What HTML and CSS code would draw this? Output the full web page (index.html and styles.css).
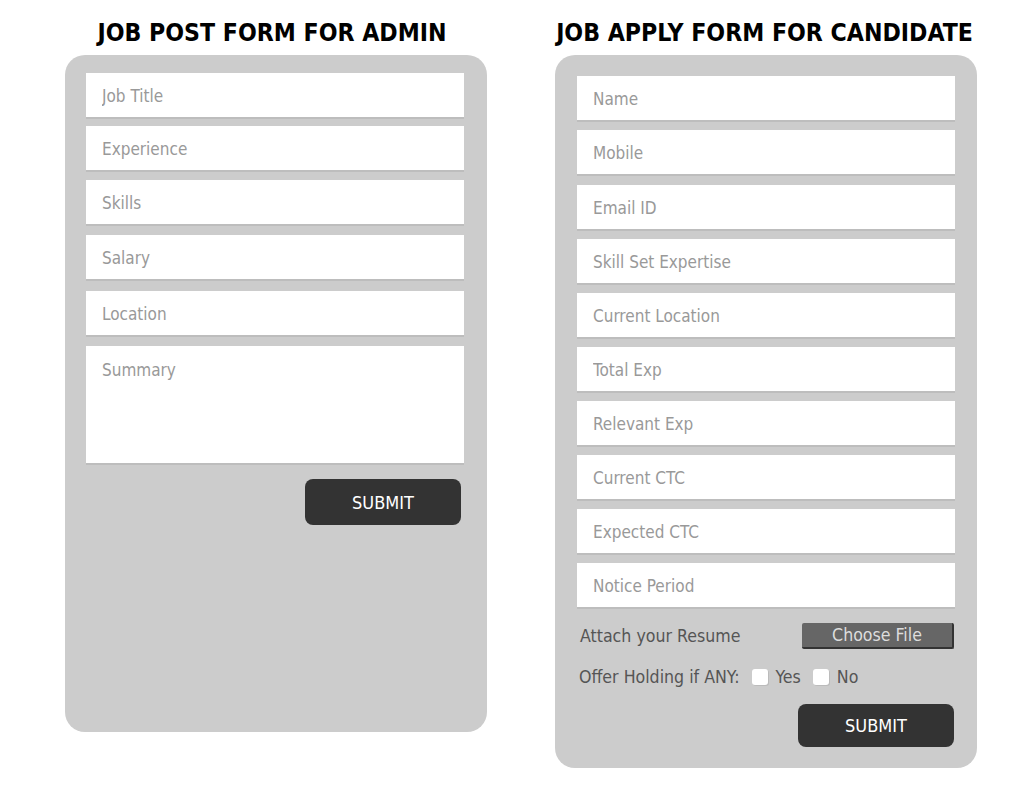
FILE: index.html
```html
<!DOCTYPE html>
<html>
<head>
<meta charset="utf-8">
<link rel="stylesheet" href="styles.css">
</head>
<body>
<div class="page">
  <section class="col">
    <h1 class="title title-admin">JOB POST FORM FOR ADMIN</h1>
    <form class="panel panel-admin">
      <input class="field" type="text" placeholder="Job Title">
      <input class="field" type="text" placeholder="Experience">
      <input class="field" type="text" placeholder="Skills">
      <input class="field" type="text" placeholder="Salary">
      <input class="field" type="text" placeholder="Location">
      <textarea class="field area" placeholder="Summary"></textarea>
      <div class="actions"><button type="button" class="submit submit-admin">SUBMIT</button></div>
    </form>
  </section>
  <section class="col">
    <h1 class="title title-cand">JOB APPLY FORM FOR CANDIDATE</h1>
    <form class="panel panel-cand">
      <input class="field" type="text" placeholder="Name">
      <input class="field" type="text" placeholder="Mobile">
      <input class="field" type="text" placeholder="Email ID">
      <input class="field" type="text" placeholder="Skill Set Expertise">
      <input class="field" type="text" placeholder="Current Location">
      <input class="field" type="text" placeholder="Total Exp">
      <input class="field" type="text" placeholder="Relevant Exp">
      <input class="field" type="text" placeholder="Current CTC">
      <input class="field" type="text" placeholder="Expected CTC">
      <input class="field" type="text" placeholder="Notice Period">
      <div class="row attach">
        <span class="label">Attach your Resume</span>
        <span class="file-btn">Choose File</span>
      </div>
      <div class="row offer">
        <span class="label">Offer Holding if ANY:</span>
        <span class="check"></span><span class="label">Yes</span>
        <span class="check"></span><span class="label">No</span>
      </div>
      <div class="actions"><button type="button" class="submit submit-cand">SUBMIT</button></div>
    </form>
  </section>
</div>
</body>
</html>
```

FILE: styles.css
```css
* { box-sizing: border-box; }
html, body { margin: 0; padding: 0; background: #fff; }
body { font-family: "DejaVu Sans", Verdana, sans-serif; }

.page {
  display: flex;
  align-items: flex-start;
  gap: 68px;
  padding-left: 65px;
}
.col {
  width: 422px;
  display: flex;
  flex-direction: column;
  align-items: center;
}
.title {
  margin: 0;
  height: 55px;
  padding-top: 18px;
  font-family: "DejaVu Sans Condensed", "DejaVu Sans", sans-serif;
  font-weight: bold;
  font-size: 24.6px;
  line-height: 30px;
  color: #000;
  white-space: nowrap;
}
.title-admin { margin-right: 8px; }
.title-cand { margin-right: 3px; }
.panel {
  width: 422px;
  background: #cccccc;
  border-radius: 20px;
  display: flex;
  flex-direction: column;
}
.panel-admin { height: 677px; padding: 18px 23px 0 21px; }
.panel-cand { height: 713px; padding: 21px 23px 0 22px; }

.field {
  display: block;
  width: 378px;
  height: 44px;
  border: none;
  outline: none;
  background: #fff;
  box-shadow: 0 2px 0 #bdbdbd;
  padding: 2px 16px 0;
  font-family: "DejaVu Sans Condensed", "DejaVu Sans", sans-serif;
  font-size: 17px;
  color: #333;
  margin-bottom: 10px;
  border-radius: 0;
}
.panel-admin .field:nth-child(1) { margin-bottom: 9px; }
.panel-admin .field:nth-child(2) { margin-bottom: 10px; }
.panel-admin .field:nth-child(3) { margin-bottom: 11px; }
.panel-admin .field:nth-child(4) { margin-bottom: 12px; }
.panel-admin .field:nth-child(5) { margin-bottom: 11px; }
.panel-cand .field:nth-child(2) { margin-bottom: 11px; }
.field::placeholder { color: #999; opacity: 1; }
.area {
  height: 117px;
  resize: none;
  padding-top: 13px;
  line-height: 22px;
}
.actions {
  display: flex;
  justify-content: flex-end;
}
.submit {
  background: #333;
  color: #fff;
  border: none;
  border-radius: 8px;
  width: 156px;
  font-family: "DejaVu Sans Condensed", "DejaVu Sans", sans-serif;
  font-size: 18px;
  padding: 0;
}
.submit-admin { height: 46px; margin-top: 6px; margin-right: 3px; }
.submit-cand { height: 43px; margin-top: 14px; }

.row {
  display: flex;
  align-items: center;
  font-family: "DejaVu Sans Condensed", "DejaVu Sans", sans-serif;
  font-size: 17.6px;
  color: #555;
}
.attach {
  justify-content: space-between;
  padding-left: 3px;
  margin-top: 6px;
  height: 26px;
}
.file-btn {
  width: 152px;
  height: 26px;
  background: #666;
  color: #ddd;
  border-right: 2px solid #333;
  border-bottom: 2px solid #333;
  border-radius: 2px;
  display: flex;
  align-items: center;
  justify-content: center;
  font-size: 17.6px;
}
.offer {
  margin-top: 15px;
  height: 26px;
  padding-left: 2px;
  gap: 8px;
}
.check {
  width: 16px;
  height: 16px;
  background: #fff;
  border-radius: 3px;
  box-shadow: 1px 1px 0 #bbb;
  margin-left: 4px;
}
```
